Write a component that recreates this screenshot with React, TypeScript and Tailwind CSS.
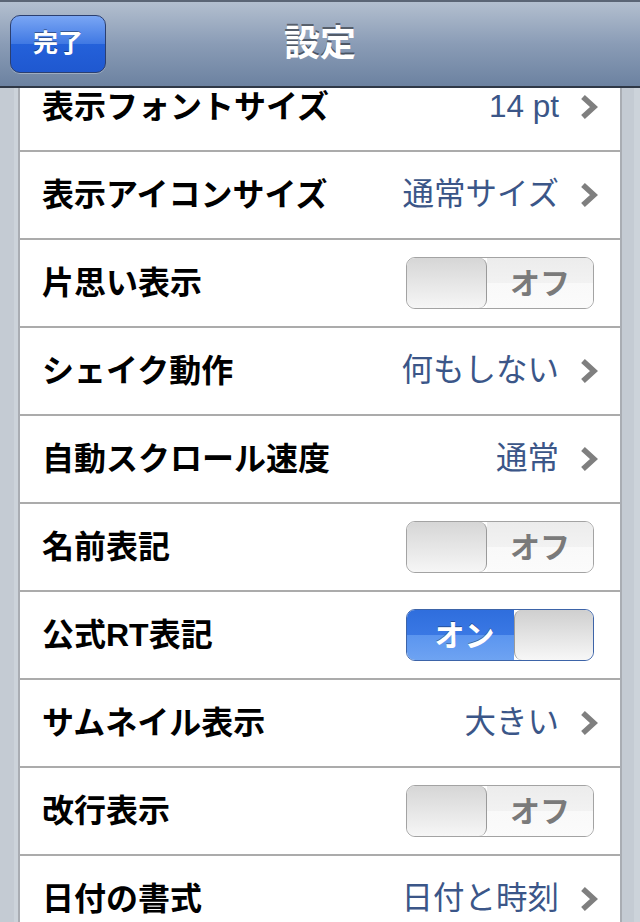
type Row =
  | { label: string; kind: "link"; value: string }
  | { label: string; kind: "switch"; on: boolean };

const rows: Row[] = [
  { label: "表示フォントサイズ", kind: "link", value: "14 pt" },
  { label: "表示アイコンサイズ", kind: "link", value: "通常サイズ" },
  { label: "片思い表示", kind: "switch", on: false },
  { label: "シェイク動作", kind: "link", value: "何もしない" },
  { label: "自動スクロール速度", kind: "link", value: "通常" },
  { label: "名前表記", kind: "switch", on: false },
  { label: "公式RT表記", kind: "switch", on: true },
  { label: "サムネイル表示", kind: "link", value: "大きい" },
  { label: "改行表示", kind: "switch", on: false },
  { label: "日付の書式", kind: "link", value: "日付と時刻" },
];

const jp = "font-['Liberation_Sans','Noto_Sans_CJK_JP',sans-serif]";

function Chevron() {
  return (
    <svg viewBox="0 0 18 26" className="ml-[21px] h-[26px] w-[18px]">
      <path d="M3 3 L14 13 L3 23" fill="none" stroke="#7f7f7f" strokeWidth="5.5" strokeLinecap="butt" strokeLinejoin="miter" />
    </svg>
  );
}

function Toggle({ on }: { on: boolean }) {
  if (on) {
    return (
      <div className="relative mr-[4px] flex h-[52px] w-[188px] overflow-hidden rounded-[9px] border border-[#3d64a8]">
        <div className="flex w-[107px] items-center justify-center bg-[linear-gradient(#2f6edd_0%,#3a78e4_50%,#5b95ef_50%,#6ea3f2_100%)] pl-2 text-[30px] font-bold text-white [text-shadow:0_-1px_0_rgba(0,0,0,0.35)]">
          オン
        </div>
        <div className="flex-1 rounded-[8px] border-l border-[#9a9a9a] bg-[linear-gradient(#cfcfcf,#f7f7f7)]" />
      </div>
    );
  }
  return (
    <div className="relative mr-[4px] flex h-[52px] w-[188px] overflow-hidden rounded-[9px] border border-[#a3a3a3]">
      <div className="w-[80px] rounded-[8px] border-r border-[#9a9a9a] bg-[linear-gradient(#d6d6d6,#f6f6f6)]" />
      <div className="flex flex-1 items-center justify-center bg-[linear-gradient(#ececec_0%,#f2f2f2_50%,#f9f9f9_50%,#fbfbfb_100%)] text-[30px] font-bold text-[#7a7a7a]">
        オフ
      </div>
    </div>
  );
}

export default function App() {
  return (
    <div className={`${jp} flex h-[922px] w-[640px] flex-col overflow-hidden bg-[repeating-linear-gradient(90deg,#c4cbd3_0px,#c4cbd3_14px,#ccd3da_14px,#ccd3da_20px)]`}>
      {/* nav bar */}
      <div className="relative z-10 flex h-[88px] shrink-0 items-center border-t-2 border-b-2 border-t-[#5b6575] border-b-[#2f3846] bg-[linear-gradient(#b3bfcf,#8a9cb6_50%,#6c82a1)] px-[10px]">
        <button className="flex h-[58px] w-[96px] items-center justify-center rounded-[10px] border border-[#2b3f70] bg-[linear-gradient(#7aa6f4_0%,#3f78e3_50%,#2461da_50%,#1f58d0_100%)] text-[25px] font-bold text-white shadow-[0_1px_0_rgba(255,255,255,0.3)] [text-shadow:0_-1px_0_rgba(0,0,0,0.4)]">
          完了
        </button>
        <div className="flex-1 pr-[96px] text-center text-[36px] font-bold text-white [text-shadow:0_-2px_0_rgba(0,0,0,0.45)]">
          設定
        </div>
      </div>

      {/* settings list */}
      <div className="flex-1 overflow-hidden">
        <div className="-mt-[24px] mx-[18px] border-x-2 border-[#a9adb3] bg-white">
          {rows.map((row) => (
            <div
              key={row.label}
              className="flex h-[88px] items-center border-b-2 border-[#ababab] pl-[22px] pr-[22px]"
            >
              <div className="flex-1 text-[32px] font-bold text-black">{row.label}</div>
              {row.kind === "link" ? (
                <div className="flex items-center">
                  <span className="text-[31.5px] text-[#3b5688]">{row.value}</span>
                  <Chevron />
                </div>
              ) : (
                <Toggle on={row.on} />
              )}
            </div>
          ))}
        </div>
      </div>
    </div>
  );
}
